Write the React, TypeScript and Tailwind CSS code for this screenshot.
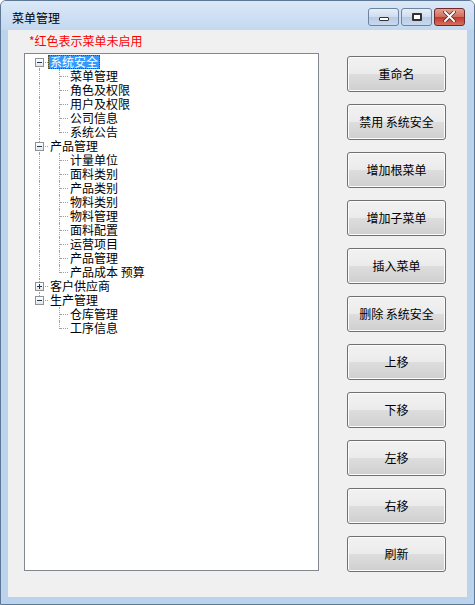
import React from 'react';

interface Node {
  label: string;
  expanded: boolean;
  selected?: boolean;
  children: string[];
}

const tree: Node[] = [
  { label: '系统安全', expanded: true, selected: true, children: ['菜单管理', '角色及权限', '用户及权限', '公司信息', '系统公告'] },
  { label: '产品管理', expanded: true, children: ['计量单位', '面料类别', '产品类别', '物料类别', '物料管理', '面料配置', '运营项目', '产品管理', '产品成本 预算'] },
  { label: '客户供应商', expanded: false, children: [] },
  { label: '生产管理', expanded: true, children: ['仓库管理', '工序信息'] },
];

const buttons = ['重命名', '禁用 系统安全', '增加根菜单', '增加子菜单', '插入菜单', '删除 系统安全', '上移', '下移', '左移', '右移', '刷新'];

const font = { fontFamily: '"Noto Sans CJK SC", "Liberation Sans", sans-serif' };

function Expander({ open }: { open: boolean }) {
  return (
    <span className="absolute left-[6px] top-[3px] w-[9px] h-[9px] border border-[#919191] bg-[linear-gradient(#ffffff,#e6e6e6)]">
      <span className="absolute left-[1px] top-[3px] w-[5px] h-[1px] bg-[#1e395b]" />
      {!open && <span className="absolute left-[3px] top-[1px] w-[1px] h-[5px] bg-[#1e395b]" />}
    </span>
  );
}

export default function App() {
  const rows: React.ReactNode[] = [];
  tree.forEach((n, i) => {
    const first = i === 0;
    const lastRoot = i === tree.length - 1;
    rows.push(
      <div key={n.label + i} className="flex h-[14px]">
        <div className="w-[4px]" />
        <div className="relative w-[20px] h-full">
          {!first && <span className="absolute left-[10px] top-0 h-[7px] border-l border-dotted border-[#a0a0a0]" />}
          {!lastRoot && <span className="absolute left-[10px] top-[7px] h-[7px] border-l border-dotted border-[#a0a0a0]" />}
          <span className="absolute left-[16px] top-[7px] w-[3px] border-t border-dotted border-[#a0a0a0]" />
          <Expander open={n.expanded} />
        </div>
        <span
          className={`ml-[-1px] px-[1px] leading-[12px] h-[14px] border border-dotted ${n.selected ? 'bg-[#3399ff] text-white border-[#5a4a20]' : 'text-black border-transparent'}`}
        >
          {n.label}
        </span>
      </div>
    );
    if (n.expanded) {
      n.children.forEach((c, j) => {
        const lastChild = j === n.children.length - 1;
        rows.push(
          <div key={n.label + c + j} className="flex h-[14px]">
            <div className="w-[4px]" />
            <div className="relative w-[20px] h-full">
              {!lastRoot && <span className="absolute left-[10px] top-0 h-[14px] border-l border-dotted border-[#a0a0a0]" />}
            </div>
            <div className="relative w-[20px] h-full">
              <span className={`absolute left-[10px] top-0 border-l border-dotted border-[#a0a0a0] ${lastChild ? 'h-[8px]' : 'h-[14px]'}`} />
              <span className="absolute left-[11px] top-[7px] w-[8px] border-t border-dotted border-[#a0a0a0]" />
            </div>
            <span className="ml-[-1px] px-[1px] leading-[12px] h-[14px] border border-transparent text-black whitespace-pre">{c}</span>
          </div>
        );
      });
    }
  });

  return (
    <div className="w-[475px] h-[605px] flex flex-col bg-[#bcd3ee] border border-[#5d7797] rounded-t-[6px] overflow-hidden text-[12px]" style={font}>
      {/* title bar */}
      <div className="h-[29px] flex items-center bg-[linear-gradient(#dbe8f7,#c3d8f0)] pl-[11px] pr-[9px]">
        <span className="flex-1 text-black pt-[4px]">菜单管理</span>
        <div className="flex gap-[2px] mt-[2px]">
          <div className="w-[31px] h-[18px] rounded-[3px] border border-[#6d83a0] bg-[linear-gradient(#e7eef8_0%,#cfdcee_50%,#b8cbe4_51%,#c9d9ee_100%)] flex items-center justify-center">
            <span className="w-[10px] h-[4px] border border-[#333] bg-white rounded-[1px] mt-[5px]" />
          </div>
          <div className="w-[31px] h-[18px] rounded-[3px] border border-[#6d83a0] bg-[linear-gradient(#e7eef8_0%,#cfdcee_50%,#b8cbe4_51%,#c9d9ee_100%)] flex items-center justify-center">
            <span className="w-[10px] h-[8px] border-2 border-[#333] rounded-[1px] bg-white" />
          </div>
          <div className="w-[31px] h-[18px] rounded-[3px] border border-[#6e2a2a] bg-[linear-gradient(#e3a093_0%,#d26c5c_50%,#c0392b_51%,#d6705e_100%)] flex items-center justify-center">
            <svg width="13" height="11" viewBox="0 0 13 11">
              <path d="M2 1 L11 10 M11 1 L2 10" stroke="#333" strokeWidth="3.4" strokeLinecap="square" />
              <path d="M2 1 L11 10 M11 1 L2 10" stroke="#fff" strokeWidth="2" strokeLinecap="square" />
            </svg>
          </div>
        </div>
      </div>
      {/* client */}
      <div className="flex-1 mx-[7px] mb-[7px] bg-[#f0f0f0] flex flex-col">
        <div className="h-[23px] pl-[21px] pt-[3px] leading-[16px] text-[#ff0000]">*红色表示菜单未启用</div>
        <div className="flex">
          <div className="ml-[16px] w-[295px] h-[518px] border border-[#828790] bg-white pt-[1px] overflow-hidden">
            {rows}
          </div>
          <div className="ml-[28px] mt-[3px] flex flex-col gap-[12px]">
            {buttons.map(b => (
              <div
                key={b}
                className="w-[99px] h-[36px] rounded-[3px] border border-[#707070] shadow-[inset_0_0_0_1px_#fcfcfc] bg-[linear-gradient(#f2f2f2_0%,#ebebeb_50%,#dddddd_51%,#cfcfcf_100%)] flex items-center justify-center text-black whitespace-pre"
              >
                {b}
              </div>
            ))}
          </div>
        </div>
      </div>
    </div>
  );
}
